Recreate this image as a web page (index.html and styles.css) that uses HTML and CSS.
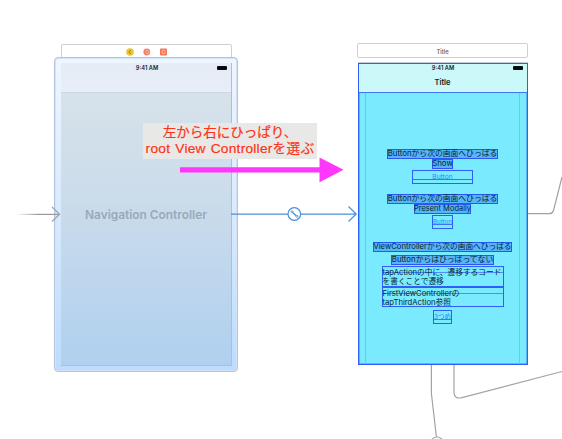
FILE: index.html
```html
<!DOCTYPE html>
<html>
<head>
<meta charset="utf-8">
<title>Storyboard</title>
<link rel="stylesheet" href="styles.css">
</head>
<body>
<main class="canvas">
  <div class="dock nav-dock">
    <svg width="42" height="8" viewBox="0 0 42 8">
      <circle cx="4" cy="4" r="3.8" fill="#edc52f"/>
      <path d="M5 1.8 2.8 4 5 6.2" fill="none" stroke="#8e7d25" stroke-width="1"/>
      <circle cx="20.8" cy="4" r="3.4" fill="#f77f63"/>
      <path d="M19 3l2-.8 1.9.8v2l-1.9 1.2M21 4v2" fill="none" stroke="#fbc0b0" stroke-width=".7"/>
      <rect x="34" y=".6" width="7" height="6.8" rx=".8" fill="#f57557"/>
      <path d="M36 2.2h3v3.3h-3zM36 4h1.5" fill="none" stroke="#fbc0b0" stroke-width=".7"/>
    </svg>
  </div>
  <section class="scene nav-scene">
    <div class="screen">
      <div class="nav-header"><span class="clock">9:41 AM</span><i class="battery"></i></div>
      <div class="nav-name">Navigation Controller</div>
    </div>
  </section>
  <div class="dock view-dock">Title</div>
  <section class="scene view-scene">
    <header class="view-header"><span class="clock">9:41 AM</span><i class="battery"></i><h1>Title</h1></header>
    <div class="content">
      <div class="label wide">Buttonから次の画面へひっぱる</div>
      <div class="label show">Show</div>
      <div class="button large"><span>Button</span></div>
      <div class="label wide second">Buttonから次の画面へひっぱる</div>
      <div class="label modal">Present Modally</div>
      <div class="button small"><span>Button</span></div>
      <div class="label controller">ViewControllerから次の画面へひっぱる</div>
      <div class="label unlinked">Buttonからはひっぱってない</div>
      <div class="note first">tapActionの中に、遷移するコード<br>を書くことで遷移</div>
      <div class="note">FirstViewControllerの<br>tapThirdAction参照</div>
      <div class="button third"><span>3つめ</span></div>
    </div>
  </section>
  <svg class="wires" width="562" height="439" viewBox="0 0 562 439">
    <defs><linearGradient id="fade" gradientUnits="userSpaceOnUse" x1="16" y1="0" x2="38" y2="0"><stop offset="0" stop-color="#999" stop-opacity="0"/><stop offset="1" stop-color="#999"/></linearGradient></defs>
    <g fill="none" stroke="#a3a3a3" stroke-width="1.2">
      <rect x="16" y="213.8" width="43" height="1.2" fill="url(#fade)" stroke="none"/>
      <path d="M52 207l7.6 7.2-7.6 7.3" stroke="#9ca6b3"/>
      <path d="M528 213.7h21.5q3 0 4-3.2L562 177"/>
      <path d="M431.4 365v28.5l5 43.5"/>
      <circle cx="437" cy="443.5" r="6.5"/>
      <path d="M454 365v28q.7 6 7 4.8L562 371.5"/>
    </g>
    <g fill="none" stroke="#4a90dc" stroke-width="1.2">
      <path d="M231 214.2H288M301 214.2H356M348.5 206.5l7.7 7.5-7.7 7.5"/>
      <circle cx="294.3" cy="214" r="6.3" fill="#fff"/>
      <path d="M292.6 212.4l3.6 3.3" stroke-width="1.3"/>
      <circle cx="292" cy="211.8" r="1" stroke-width=".9" fill="#fff"/><circle cx="296.9" cy="216.3" r="1" stroke-width=".9" fill="#fff"/>
    </g>
  </svg>
  <div class="annotation"><span class="line-one">左から右にひっぱり、</span><span class="line-two">root View Controllerを選ぶ</span></div>
  <svg class="arrow" width="166" height="26" viewBox="0 0 166 26"><path d="M0 10.2h139.5V.5L163.5 12.8 139.5 25.3V15.5H0z" fill="#ff37fd"/></svg>
</main>
</body>
</html>
```
FILE: styles.css
```css
* { box-sizing: border-box; }
body { margin: 0; background: #fff; font-family: Inter, "Noto Sans CJK JP", sans-serif; }
.canvas { position: relative; width: 562px; height: 439px; overflow: hidden; }
.dock { position: absolute; height: 15px; border: 1px solid #cfcfcf; border-radius: 2px; display: flex; align-items: center; justify-content: center; }
.nav-dock { left: 61px; top: 44px; width: 171px; }
.view-dock { left: 357px; top: 43px; width: 171px; font-size: 5.8px; font-weight: 500; color: #555; padding-top: 2px; }
.scene { position: absolute; }
.nav-scene { left: 54px; top: 57px; width: 184px; height: 315px; padding: 5px; border: 1px solid #b5c4dd; border-radius: 4px; background: linear-gradient(#eef6ff, #d9eaff 50%, #bcdcff); box-shadow: inset 0 0 0 1px #d3e2f5; }
.screen { height: 303px; width: 171px; margin-left: 1px; border: 1px solid #a9c0da; border-top: 0; border-left: 0; background: linear-gradient(#dae3eb, #cbdcea 45%, #afd0ef); display: flex; flex-direction: column; }
.nav-header { position: relative; height: 30px; background: linear-gradient(#e6ecf5, #e8eef9); border-bottom: 1px solid #ced8e2; text-align: center; }
.clock { display: block; font-size: 5.7px; line-height: 8px; font-weight: 600; color: #222; text-align: center; }
.nav-header .clock { padding: 1px 0 0 2px; }
.battery { position: absolute; width: 10px; height: 4px; background: #050a0d; border-radius: 1px; }
.nav-header .battery { right: 4px; top: 3px; }
.nav-name { flex: 1; padding-top: 114px; text-align: center; font-size: 11.9px; line-height: 16px; font-weight: 600; color: #98a9bc; }
.view-scene { left: 358px; top: 63px; width: 170px; height: 302px; border: 1px solid #315cfa; background: #7aeaff; box-shadow: 0 -1px #c3ccdc, inset 0 0 0 .5px #3f7cff; }
.view-header { position: relative; height: 29px; background: #cbf8f9; border-bottom: 1px solid #3f78f5; }
.view-header .clock { line-height: 8px; }
.view-header .battery { right: 4px; top: 2px; }
.view-header h1 { margin: 4px 1px 0 0; text-align: center; font-size: 7.5px; line-height: 14px; font-weight: 600; color: #10201f; }
.content { height: 271px; margin: 0 7px 0 6px; border: 1px solid #66c8fa; border-width: 0 1px; padding-top: 56px; display: flex; flex-direction: column; align-items: center; }
.label { height: 10px; border: 1px solid #2858f5; background: #55b4fb; font-size: 7.8px; line-height: 7px; color: #06262d; white-space: nowrap; display: flex; justify-content: center; flex: none; }
.wide { width: 111px; }
.show { width: 21px; }
.modal { width: 57px; font-size: 7.5px; }
.controller { width: 139px; margin-top: 13px; font-size: 7.7px; }
.unlinked { width: 103px; margin-top: 3px; }
.second { margin-top: 10px; }
.button { flex: none; border: 1px solid #2c60f8; height: 14px; display: flex; justify-content: center; font-size: 6.7px; line-height: 12px; color: #288ceb; background: linear-gradient(transparent 8px, #3a75f6 8px, #3a75f6 9px, transparent 9px); }
.large { width: 61px; margin-top: 1px; }
.small { width: 21px; margin-top: 1px; font-size: 6.2px; }
.third { width: 19px; margin-top: 3px; font-size: 6.5px; }
.note { flex: none; width: 122px; height: 20px; border: 1px solid #2c60f8; font-size: 7.7px; line-height: 9px; padding-top: .5px; color: #06262d; white-space: nowrap; background: linear-gradient(transparent 5px, #4c8ffa 5px, #4c8ffa 6px, transparent 6px); }
.first { height: 21px; margin-top: 1px; }
.wires { position: absolute; left: 0; top: 0; }
.annotation { position: absolute; left: 143px; top: 123px; width: 174px; height: 36px; padding-top: 2px; background: #e8e8e7; color: #ff3217; font-family: "Liberation Sans", "Noto Sans CJK JP", sans-serif; font-size: 13.7px; line-height: 16px; -webkit-text-stroke: .2px #ff3217; white-space: nowrap; display: flex; flex-direction: column; align-items: center; }
.line-one { font-size: 13.5px; }
.line-two { letter-spacing: .25px; word-spacing: 1px; }
.arrow { position: absolute; left: 179.5px; top: 157px; }
```
